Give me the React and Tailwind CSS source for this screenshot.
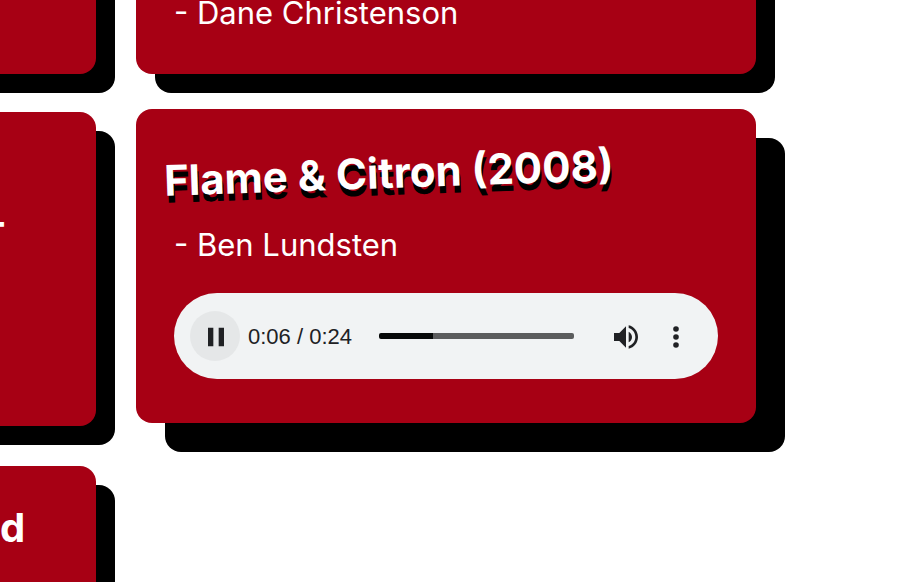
import { useState } from "react";

const FONT = "font-['Inter','Liberation_Sans',sans-serif]";

function AudioPlayer({ duration, start }) {
  const [time, setTime] = useState(start);
  const [playing, setPlaying] = useState(true);
  const percent = (time / duration) * 100;
  const format = (s) => `0:${String(Math.floor(s)).padStart(2, "0")}`;

  return (
    <div className="flex h-[86px] items-center rounded-full bg-[#f1f3f4] pr-[17px] pl-4 text-[#202124]">
      <button
        type="button"
        aria-label={playing ? "Pause" : "Play"}
        onClick={() => setPlaying(!playing)}
        className="grid size-[50px] shrink-0 place-items-center rounded-full bg-[#e5e7e8] pt-0.5 pl-0.5"
      >
        <svg viewBox="0 0 24 24" className="size-8" fill="currentColor" aria-hidden="true">
          {playing ? <path d="M6 5h4v14H6zM14 5h4v14h-4z" /> : <path d="M8 5v14l11-7z" />}
        </svg>
      </button>
      <span className="ml-2 pt-0.5 whitespace-nowrap font-['Liberation_Sans',sans-serif] text-[22px] leading-6">
        {format(time)} / {format(duration)}
      </span>
      <input
        type="range"
        aria-label="Seek"
        min="0"
        max={duration}
        step="0.1"
        value={time}
        onChange={(e) => setTime(Number(e.target.value))}
        className="ml-[27px] h-[6px] min-w-0 flex-1 cursor-pointer appearance-none rounded-xs [&::-webkit-slider-thumb]:size-0 [&::-webkit-slider-thumb]:appearance-none"
        style={{ background: `linear-gradient(to right, #070909 ${percent}%, #5b5c5d ${percent}%)` }}
      />
      <button type="button" aria-label="Mute" className="ml-[27px] grid size-[50px] shrink-0 place-items-center pt-0.5">
        <svg viewBox="0 0 24 24" className="size-8" fill="currentColor" aria-hidden="true">
          <path d="M3 9v6h4l5 5V4L7 9H3zm13.5 3c0-1.77-1.02-3.29-2.5-4.03v8.05c1.48-.73 2.5-2.25 2.5-4.02zM14 3.23v2.06c2.89.86 5 3.54 5 6.71s-2.11 5.85-5 6.71v2.06c4.01-.91 7-4.49 7-8.77s-2.99-7.86-7-8.77z" />
        </svg>
      </button>
      <button type="button" aria-label="More options" className="grid size-[50px] shrink-0 place-items-center pt-0.5">
        <svg viewBox="0 0 24 24" className="size-8" fill="currentColor" aria-hidden="true">
          <circle cx="12" cy="6" r="2.1" />
          <circle cx="12" cy="12" r="2.1" />
          <circle cx="12" cy="18" r="2.1" />
        </svg>
      </button>
    </div>
  );
}

export default function App() {
  return (
    <main className={`flex h-screen gap-10 overflow-hidden bg-white pr-[152px] text-white ${FONT}`}>
      <div className="-mt-10 -ml-10 w-[136px] shrink-0">
        <section className="h-[114px] rounded-2xl bg-[#a70014] shadow-[19px_19px_0_#000]" />
        <section className="mt-[38px] h-[314px] rounded-2xl bg-[#a70014] pt-[86px] pl-7 shadow-[19px_19px_0_#000]">
          <h2 className="text-[40px] leading-12 font-bold">-</h2>
        </section>
        <section className="mt-10 h-[314px] rounded-2xl bg-[#a70014] pt-[38px] pl-10 shadow-[19px_19px_0_#000]">
          <h2 className="text-[40px] leading-12 font-bold">d</h2>
        </section>
      </div>

      <div className="-mt-10 min-w-0 flex-1">
        <section className="h-[114px] rounded-2xl bg-[#a70014] px-[38px] pt-[33px] shadow-[19px_19px_0_#000]">
          <p className="text-[31px] leading-10">- Dane Christenson</p>
        </section>
        <section className="mt-[35px] rounded-2xl bg-[#a70014] px-[38px] pt-10 pb-11 shadow-[29px_29px_0_#000]">
          <h2 className="-ml-2.5 w-fit -rotate-2 text-[42px] leading-12 font-bold whitespace-nowrap [text-shadow:1px_7px_0_#000]">
            Flame &amp; Citron (2008)
          </h2>
          <p className="mt-7 mb-7 text-[31px] leading-10">- Ben Lundsten</p>
          <AudioPlayer duration={24} start={6.7} />
        </section>
      </div>
    </main>
  );
}
